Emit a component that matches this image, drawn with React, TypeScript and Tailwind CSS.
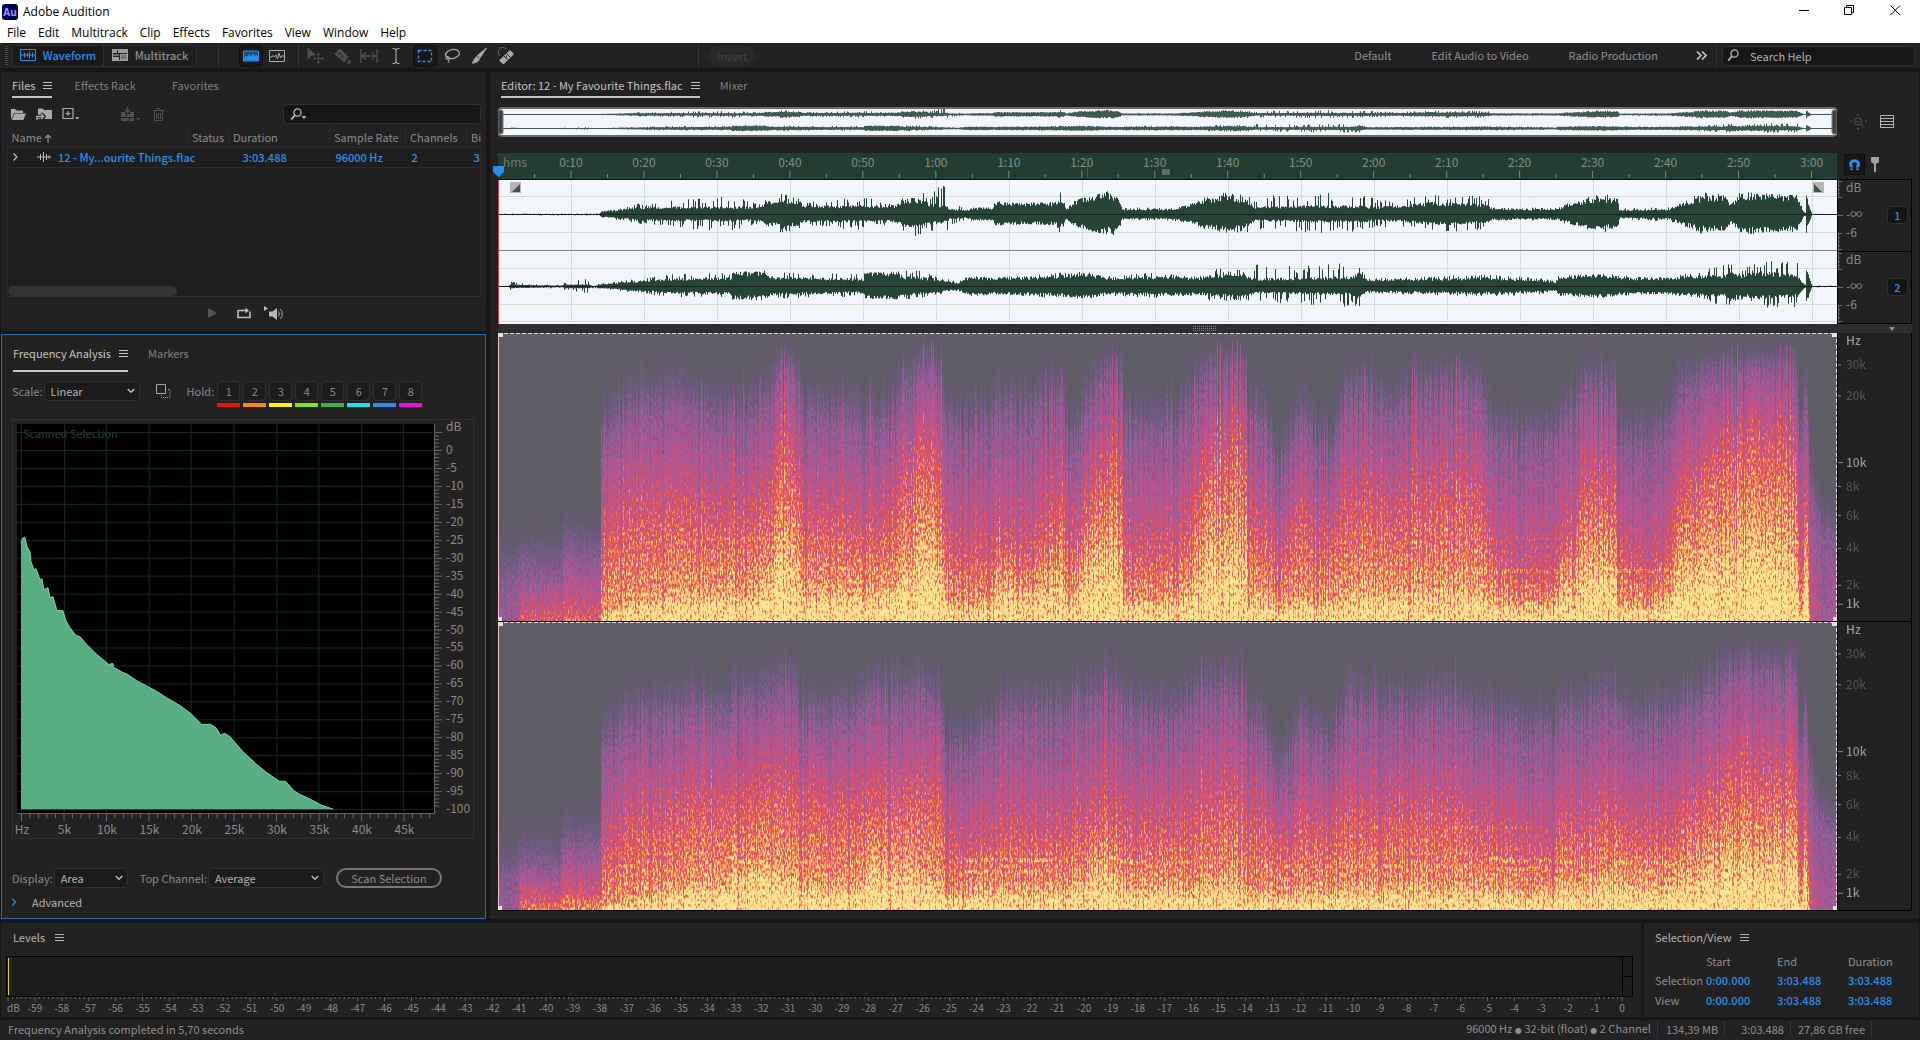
import React from "react";

/* ---------- helpers ---------- */

type Point = number[];

function rng(seed: number) {
  let s = seed;
  return () => {
    s = (s * 1664525 + 1013904223) % 4294967296;
    return s / 4294967296;
  };
}

function sample(points: Point[], t: number, k: number) {
  for (let i = 1; i < points.length; i++) {
    if (t <= points[i][0]) {
      const a = points[i - 1];
      const b = points[i];
      const f = b[0] === a[0] ? 1 : (t - a[0]) / (b[0] - a[0]);
      return a[k] + (b[k] - a[k]) * f;
    }
  }
  return points[points.length - 1][k];
}

const DURATION = 183.488;
const W = 1339;

/* ---------- waveform data: [seconds, body, peak] ---------- */

const WAVE_1: Point[] = [
  [0, 0.5, 1], [13.8, 0.5, 1], [14.2, 3, 4], [16, 4, 6], [19, 7, 11], [25, 7, 16], [32, 7, 20], [36, 7, 11], [36.8, 12, 18], [39, 12, 21],
  [41, 12, 18], [41.8, 8, 12], [50, 8, 19], [54.5, 8, 9], [55.4, 12, 19], [56, 14, 28], [58, 14, 24], [59, 10, 16], [60, 10, 26],
  [61.3, 8, 32], [62, 5, 12], [64, 4, 8], [65, 6, 7], [67.6, 6, 7], [68.2, 12, 13], [72, 10, 11], [76.4, 11, 13], [77, 15, 24], [77.8, 5, 6],
  [79, 12, 14], [82.8, 20, 23], [85.2, 14, 25], [85.4, 5, 7], [92.4, 5, 7], [95, 9, 11], [97, 13, 18], [98.5, 16, 25], [100, 17, 21],
  [102.4, 13, 21], [103.8, 7, 18], [112, 8, 22], [118, 8, 20], [121, 7, 15], [124, 8, 16], [128, 11, 20], [135.7, 9, 19], [135.9, 6, 7],
  [140, 5, 7], [145, 5, 7], [147, 10, 14], [149.6, 14, 19], [153.4, 14, 22], [153.6, 4, 6], [160.5, 5, 8], [162.5, 11, 14], [165, 16, 23],
  [168, 16, 20], [169, 9, 11], [170.2, 18, 24], [174, 18, 21], [178, 16, 20], [178.8, 3, 4], [179.1, 1, 1], [179.2, 19, 20], [179.5, 12, 12],
  [180, 0.5, 0.5], [184, 0.5, 0.5],
];
const WAVE_2: Point[] = [
  [0, 0.5, 0.5], [1.4, 0.5, 0.5], [1.6, 2, 5], [4, 1.5, 3], [8, 1, 2], [8.8, 1, 1], [9, 2, 5], [12.5, 2, 8], [13, 0.5, 2], [14.2, 2, 3], [19, 5, 8],
  [23, 7, 12], [29, 8, 14], [31.9, 8, 13], [32, 13, 15], [36.5, 13, 17], [37.5, 9, 15], [42, 8, 13], [50.1, 7, 13], [50.3, 13, 14],
  [54.6, 13, 15], [55.5, 9, 15], [57, 9, 18], [60, 7, 10], [63, 3, 5], [64, 8, 12], [68, 8, 9], [75, 9, 13], [80, 12, 15], [84, 8, 11], [90, 9, 14],
  [96, 8, 10], [98, 11, 19], [102, 11, 17], [104, 7, 23], [110, 8, 20], [117, 9, 27], [118, 14, 24], [119, 6, 8], [135, 8, 12], [143, 6, 9], [144.9, 4, 5],
  [145.2, 9, 11], [150, 11, 14], [155, 8, 11], [160, 8, 9], [165, 10, 17], [168, 10, 22], [169, 16, 23], [170, 10, 16], [173, 13, 25],
  [178, 11, 26], [178.8, 3, 4], [179.1, 1, 1], [179.2, 16, 18], [179.5, 12, 12], [180, 0.5, 1], [184, 0.5, 1],
];

function wavePath(points: Point[], centre: number, scale: number, seed: number) {
  const r = rng(seed);
  let d = "";
  for (let x = 1; x < W; x++) {
    const t = (x / W) * DURATION;
    const body = sample(points, t, 1);
    const peak = sample(points, t, 2);
    const one = (down: boolean) => {
      let v = body * (0.78 + r() * 0.4);
      if (r() < 0.22) v = body + (peak - body) * (0.4 + r() * 0.6);
      return v * scale * (down ? 0.86 : 1);
    };
    const up = centre - one(false);
    const dn = centre + one(true);
    d += `M${x} ${up.toFixed(1)}V${dn.toFixed(1)}`;
  }
  return d;
}

const wave1 = wavePath(WAVE_1, 35.5, 1, 7);
const wave2 = wavePath(WAVE_2, 107.5, 1, 19);
const mini1 = wavePath(WAVE_1, 6.5, 0.2, 7);
const mini2 = wavePath(WAVE_2, 20.5, 0.2, 19);

/* ---------- spectrogram data: [seconds, violet, red, yellow] as a share of the height ---------- */

const SPEC_1: Point[] = [
  [0, 0.14, -0.5, -0.9], [2.5, 0.14, -0.4, -0.7], [3, 0.18, 0.02, -0.05], [8.5, 0.16, 0.01, -0.05], [9, 0.24, 0.03, -0.02], [14, 0.2, 0.01, -0.03], [14.1, 0.62, 0.26, 0.03], [17, 0.7, 0.34, 0.06],
  [22, 0.74, 0.38, 0.09], [25, 0.74, 0.38, 0.11], [30, 0.7, 0.36, 0.12], [36, 0.7, 0.36, 0.13], [37, 0.76, 0.44, 0.18], [38.5, 0.86, 0.58, 0.3],
  [40, 0.88, 0.6, 0.32], [41, 0.8, 0.5, 0.22], [41.6, 0.7, 0.34, 0.12], [47, 0.7, 0.34, 0.12], [53.6, 0.65, 0.3, 0.12], [55, 0.76, 0.44, 0.18], [57, 0.86, 0.57, 0.3],
  [60.5, 0.86, 0.56, 0.3], [61.3, 0.66, 0.28, 0.08], [66, 0.66, 0.22, 0.07], [68, 0.7, 0.24, 0.1], [68.3, 0.72, 0.3, 0.17], [73, 0.72, 0.26, 0.12],
  [76.5, 0.76, 0.38, 0.18], [77.3, 0.82, 0.44, 0.24], [78, 0.6, 0.25, 0.07], [80.5, 0.72, 0.4, 0.24], [83, 0.86, 0.54, 0.32], [85.4, 0.84, 0.55, 0.3], [85.6, 0.66, 0.25, 0.08],
  [92, 0.66, 0.24, 0.09], [94.5, 0.72, 0.32, 0.14], [96.5, 0.82, 0.52, 0.28], [98, 0.88, 0.62, 0.36], [102.5, 0.88, 0.61, 0.36], [102.8, 0.64, 0.26, 0.07],
  [104, 0.74, 0.36, 0.14], [107, 0.5, 0.23, 0.06], [110, 0.7, 0.36, 0.1], [114, 0.55, 0.28, 0.08], [116, 0.76, 0.4, 0.12], [118.5, 0.78, 0.42, 0.14],
  [122, 0.7, 0.38, 0.12], [126, 0.78, 0.43, 0.14], [130, 0.82, 0.47, 0.16], [134.3, 0.8, 0.45, 0.14], [136, 0.64, 0.26, 0.09], [140, 0.62, 0.16, 0.07],
  [144.5, 0.62, 0.15, 0.07], [146, 0.68, 0.28, 0.16], [149, 0.8, 0.47, 0.25], [153, 0.8, 0.47, 0.25], [153.4, 0.62, 0.25, 0.08], [157, 0.62, 0.17, 0.07], [160.5, 0.66, 0.24, 0.1],
  [162, 0.78, 0.42, 0.22], [166, 0.85, 0.56, 0.3], [170, 0.88, 0.65, 0.36], [177.8, 0.88, 0.62, 0.36], [178.3, 0.55, 0.14, 0.01], [178.8, 0.65, 0.16, 0.05],
  [178.9, 0.76, 0.4, 0.24], [179.4, 0.74, 0.4, 0.22], [179.6, 0.5, 0.08, 0], [181, 0.3, -0.5, -0.9], [184, 0.24, -0.5, -0.9],
];
const SPEC_2: Point[] = [
  [0, 0.1, -0.5, -0.9], [2.5, 0.1, -0.4, -0.7], [3, 0.16, 0.04, -0.03], [8.5, 0.13, 0.03, -0.03], [9, 0.22, 0.07, 0], [14, 0.2, 0.04, 0], [14.1, 0.56, 0.17, 0.02], [18, 0.64, 0.28, 0.04],
  [24, 0.68, 0.36, 0.1], [31.9, 0.65, 0.36, 0.1], [32, 0.72, 0.38, 0.19], [36.5, 0.72, 0.41, 0.18], [40, 0.76, 0.43, 0.15], [42, 0.64, 0.37, 0.1], [50, 0.68, 0.36, 0.1], [50.2, 0.72, 0.36, 0.18],
  [55, 0.72, 0.4, 0.17], [58, 0.75, 0.43, 0.15], [60.5, 0.68, 0.38, 0.11], [61.5, 0.52, 0.22, 0.06], [66, 0.58, 0.21, 0.08], [70, 0.68, 0.26, 0.09], [78, 0.68, 0.28, 0.1], [83, 0.74, 0.36, 0.18],
  [86, 0.7, 0.3, 0.11], [92, 0.64, 0.28, 0.09], [96, 0.74, 0.36, 0.11], [102.4, 0.77, 0.43, 0.14], [102.8, 0.58, 0.27, 0.07], [104, 0.68, 0.36, 0.1], [107, 0.45, 0.23, 0.06],
  [110, 0.64, 0.32, 0.09], [114, 0.55, 0.27, 0.08], [117, 0.72, 0.36, 0.1], [122, 0.66, 0.32, 0.1], [130, 0.7, 0.36, 0.1], [136, 0.64, 0.26, 0.09], [144, 0.6, 0.2, 0.08], [144.6, 0.56, 0.12, 0.05],
  [145, 0.65, 0.29, 0.11], [152, 0.72, 0.36, 0.15], [155, 0.62, 0.26, 0.11], [161, 0.64, 0.26, 0.11], [165, 0.72, 0.39, 0.18], [170, 0.82, 0.48, 0.24], [177.8, 0.81, 0.46, 0.24], [178.3, 0.5, 0.14, 0.01],
  [178.8, 0.55, 0.16, 0.05], [178.9, 0.68, 0.34, 0.2], [179.4, 0.66, 0.34, 0.18], [179.6, 0.45, 0.08, 0], [181, 0.3, -0.5, -0.9], [184, 0.24, -0.5, -0.9],
];

const H = 289;

function Spectrum({ id, points, seed, harmonics }: { id: string; points: Point[]; seed: number; harmonics: number[][] }) {
  const r = rng(seed);
  const columns: React.ReactNode[] = [];
  for (let x = 0; x < W; x++) {
    const t = (x / W) * DURATION;
    let k = 0.97 + r() * 0.06;
    const dice = r();
    let shade = "";
    if (dice < 0.14) {
      k *= 0.88;
      shade = "#000";
    } else if (dice > 0.94 && t > 14) {
      k *= 1.1;
      shade = "#fff";
    }
    if (t > 61.5 && t < 160 && x % 5 === 0) {
      k *= 0.86;
      shade = "#000";
    }
    const hv = sample(points, t, 1) * k;
    const hr = sample(points, t, 2) * k * (0.9 + r() * 0.2);
    const hy = sample(points, t, 3) * k * (0.8 + r() * 0.4);
    const y = [1 - Math.min(1, hv + 0.22), 1 - Math.min(0.96, hv), 1 - hr, 1 - hy, 1 - hy * 0.4, 1.02].map((v) => v * H);
    for (let i = 0; i < 5; i++) {
      columns.push(
        <rect key={`${x}-${i}`} x={x} width="1" y={y[i].toFixed(1)} height={Math.max(0, y[i + 1] - y[i] + 0.4).toFixed(1)} fill={`url(#${id}-g${i})`} />
      );
    }
    if (shade) {
      columns.push(<rect key={`${x}-s`} x={x} width="1" y={y[1].toFixed(1)} height={H} fill={shade} opacity={shade === "#000" ? 0.14 : 0.1} />);
    }
  }
  const dashes: React.ReactNode[] = [];
  harmonics.forEach(([from, to, level, alpha], n) => {
    let x = (from / DURATION) * W;
    const end = (to / DURATION) * W;
    while (x < end) {
      const w = 3 + r() * 12;
      dashes.push(<rect key={`${n}-${x}`} x={x} width={w} y={(1 - level) * H} height="4" fill="#fff" opacity={alpha * (0.5 + r() * 0.7)} />);
      x += w + r() * 6;
    }
  });
  const levels = [0, 0.28, 0.57, 0.75, 0.94, 1].map((v) => Math.round(v * 255));
  return (
    <svg className="block h-full w-full" viewBox={`0 0 ${W} ${H}`} preserveAspectRatio="none" role="img" aria-label="Spectral frequency display">
      <defs>
        {[0, 1, 2, 3, 4].map((i) => (
          <linearGradient key={i} id={`${id}-g${i}`} x1="0" y1="0" x2="0" y2="1">
            <stop offset="0" stopColor={`rgb(${levels[i]},${levels[i]},${levels[i]})`} />
            <stop offset="1" stopColor={`rgb(${levels[i + 1]},${levels[i + 1]},${levels[i + 1]})`} />
          </linearGradient>
        ))}
        <filter id={`${id}-heat`} x="0" y="0" width="100%" height="100%" colorInterpolationFilters="sRGB">
          <feTurbulence type="fractalNoise" baseFrequency="0.67 0.23" numOctaves="3" seed={seed} result="t" />
          <feColorMatrix in="t" type="matrix" values="0 0 0 2.2 -0.6  0 0 0 2.2 -0.6  0 0 0 2.2 -0.6  0 0 0 0 1" result="n" />
          <feComposite in="SourceGraphic" in2="n" operator="arithmetic" k1="0.6" k2="0.7" k3="0" k4="0" />
          <feComponentTransfer>
            <feFuncR type="table" tableValues="0.373 0.39 0.45 0.58 0.69 0.79 0.87 0.97 0.99 0.99 0.99" />
            <feFuncG type="table" tableValues="0.365 0.36 0.36 0.36 0.34 0.32 0.33 0.5 0.73 0.89 0.9" />
            <feFuncB type="table" tableValues="0.4 0.43 0.52 0.59 0.58 0.5 0.37 0.31 0.44 0.57 0.58" />
          </feComponentTransfer>
        </filter>
      </defs>
      <g filter={`url(#${id}-heat)`} shapeRendering="crispEdges">
        <rect width={W} height={H} fill="#000" />
        {columns}
        {dashes}
      </g>
      <path d={`M0 .5H${W}M${W - 0.5} 0V${H}`} fill="none" stroke="#e4e4e4" strokeDasharray="4 2" />
      <path d={`M.5 0V${H}`} stroke="#f3c5c8" />
      <path d={`M0 0h5v4H0zM${W - 5} 0h5v4h-5zM0 ${H - 4}h4v4H0zM${W - 4} ${H - 4}h4v4h-4z`} fill="#e6dfe4" />
    </svg>
  );
}

const HARMONICS_1 = [
  [28, 60, 0.18, 0.16], [22, 60, 0.29, 0.12], [62, 78, 0.18, 0.16], [104, 135, 0.18, 0.16], [136, 145, 0.18, 0.28], [136, 145, 0.29, 0.14], [153, 161, 0.18, 0.24], [140, 145, 0.13, 0.14], [155, 159, 0.13, 0.16],
];
const HARMONICS_2 = [
  [64, 74, 0.18, 0.4], [64, 74, 0.14, 0.34], [75, 78, 0.18, 0.3], [80, 86, 0.18, 0.2], [86, 92, 0.17, 0.2], [104, 134, 0.16, 0.14], [122, 145, 0.29, 0.14], [136, 144, 0.18, 0.4], [136, 144, 0.15, 0.34], [153, 161, 0.17, 0.32], [155, 158, 0.14, 0.3],
];

/* ---------- icons ---------- */

function Menu() {
  return (
    <svg width="9" height="9" viewBox="0 0 9 9" stroke="currentColor" aria-hidden="true">
      <path d="M0 1.5h9M0 4.5h9M0 7.5h9" />
    </svg>
  );
}

function Magnifier({ caret = false }: { caret?: boolean }) {
  return (
    <svg width="18" height="13" viewBox="0 0 18 13" fill="none" stroke="#b4b4b4" strokeWidth="1.3" aria-hidden="true">
      <circle cx="7.5" cy="4.5" r="3.6" />
      <path d="M5 7.2 1.2 11.6" strokeWidth="1.8" />
      {caret && <path d="M11.5 8h5l-2.5 3z" fill="#b4b4b4" stroke="none" />}
    </svg>
  );
}

function Tool({ label, active, dim, children }: { label: string; active?: boolean; dim?: boolean; children: React.ReactNode }) {
  return (
    <button
      aria-label={label}
      className={`flex h-[22px] w-6 items-center justify-center rounded-sm border ${active ? "border-[#101010] bg-[#181818] text-[#2f8ee8]" : dim ? "border-transparent text-[#4e4e4e]" : "border-transparent text-[#a9a9a9]"}`}
    >
      <svg width="18" height="18" viewBox="0 0 18 18" fill="none" stroke="currentColor" aria-hidden="true">
        {children}
      </svg>
    </button>
  );
}

function Tab({ label, active, wide }: { label: string; active?: boolean; wide?: boolean }) {
  if (!active) return <button className="pb-[5px] text-[#808080]">{label}</button>;
  return (
    <button className={`flex items-center gap-2 border-b-2 border-[#c4c4c4] ${wide ? "pb-[9px]" : "pb-[3px]"} text-[#c4c4c4]`}>
      {label}
      <Menu />
    </button>
  );
}

function Choice({ id, value, className }: { id: string; value: string; className: string }) {
  return (
    <span className={`relative h-5 ${className}`}>
      <select id={id} className="h-5 w-full appearance-none rounded-sm border border-[#303030] bg-[#1b1b1b] pl-[6px] leading-[18px] text-[#b4b4b4]">
        <option>{value}</option>
      </select>
      <svg className="pointer-events-none absolute top-[7px] right-[5px]" width="8" height="6" viewBox="0 0 8 6" fill="none" stroke="#c0c0c0" strokeWidth="1.4" aria-hidden="true">
        <path d="M.7 1 4 4.3 7.3 1" />
      </svg>
    </span>
  );
}

/* ---------- title and tool bars ---------- */

function TitleBar() {
  return (
    <header className="bg-white font-['Open_Sans',sans-serif] text-xs text-black">
      <div className="flex h-[23px] items-center pl-[2px]">
        <svg width="16" height="16" viewBox="0 0 16 16" aria-hidden="true">
          <rect width="16" height="16" rx="3" fill="#00005b" />
          <text x="8" y="11.5" textAnchor="middle" fontSize="10" fontWeight="700" fill="#9999ff" fontFamily="Open Sans">Au</text>
        </svg>
        <span className="ml-[5px]">Adobe Audition</span>
        <div className="ml-auto flex self-start pr-[2px]">
          <button aria-label="Minimize" className="flex h-5 w-11 items-center justify-center">
            <svg width="11" height="11" stroke="#000"><path d="M0 5.5h10" /></svg>
          </button>
          <button aria-label="Restore" className="flex h-5 w-[46px] items-center justify-center">
            <svg width="11" height="11" fill="none" stroke="#000"><path d="M.5 2.5h7v7h-7zM2.5 2.5V.5h7v7h-2" /></svg>
          </button>
          <button aria-label="Close" className="flex h-5 w-[46px] items-center justify-center">
            <svg width="11" height="11" stroke="#000"><path d="m.5.5 9.5 9.5M10 .5.5 10" /></svg>
          </button>
        </div>
      </div>
      <nav className="flex h-5 items-center gap-3 pl-[7px] leading-5">
        {["File", "Edit", "Multitrack", "Clip", "Effects", "Favorites", "View", "Window", "Help"].map((m) => (
          <button key={m}>{m}</button>
        ))}
      </nav>
    </header>
  );
}

function ToolBar() {
  return (
    <div className="flex h-[25px] items-center bg-[#222222]">
      <svg width="3" height="19" className="ml-[5px]" aria-hidden="true"><path d="M1.5 0v19" stroke="#4a4a4a" strokeWidth="3" strokeDasharray="1 1" /></svg>
      <div className="ml-1 flex h-[22px] rounded-sm border border-[#303030] bg-[#1e1e1e]">
        <button className="flex w-[90px] items-center justify-center gap-[7px] bg-[#191919] pb-px font-medium text-[#2f8ee8]">
          <svg width="16" height="12" fill="none" stroke="#2f8ee8" aria-hidden="true">
            <path d="M.5 .5h15v11H.5zM1 6h14M4.5 3.5v5M7.5 4v4M9.5 2.5v7M12.5 3.5v5" />
          </svg>
          Waveform
        </button>
        <button className="flex w-[93px] items-center justify-center gap-[7px] border-l border-[#303030] pb-px font-medium text-[#8f8f8f]">
          <svg width="16" height="12" aria-hidden="true">
            <path d="M0 0h16v12H0z" fill="#9c9c9c" />
            <path d="M1 4.5h14M1 7.5h7M7.5 5v6M5.5 1v3" stroke="#222" />
            <path d="M1 5h6v2H1zM9 6h5v4H9z" fill="#6e6e6e" />
          </svg>
          Multitrack
        </button>
      </div>
      <span className="ml-[21px] h-[22px] w-px bg-[#353535]" />
      <div className="ml-5 flex gap-[2px]">
        <Tool label="Spectral frequency display" active>
          <path d="M1.5 4h15v10h-15z" fill="#174e86" />
          <path d="M2 12.5 4 9l1 2 2-3 2 2 2-3 1 3 2-2 2 3v2H2z" fill="#2f8ee8" />
        </Tool>
        <Tool label="Spectral pitch display">
          <path d="M1.5 3.5h15v11h-15z" />
          <path d="M2 10h2l1-1.5L6.5 10 8 8l1.5 4L11 6l1.5 5 1-2H16" />
        </Tool>
      </div>
      <span className="ml-[9px] h-[22px] w-px bg-[#353535]" />
      <div className="ml-1 flex gap-[3px]">
        <Tool label="Move" dim>
          <path d="m2 1 7 7-4 .3L2 12z" fill="currentColor" />
          <path d="M12.5 7v9M8 11.5h9M11 8l1.5-1.5L14 8M11 15l1.5 1.5L14 15M9 10l-1.5 1.5L9 13M16 10l1.5 1.5L16 13" />
        </Tool>
        <Tool label="Razor" dim>
          <path d="m2 7 5-5 8 8-4 5z" fill="currentColor" />
          <path d="m6 6 5 5" stroke="#222" strokeWidth="2" strokeDasharray="2 1.5" />
          <path d="m16 13 1.5 3-3 .5z" fill="currentColor" />
        </Tool>
        <Tool label="Slip" dim>
          <path d="M1 2v14M17 2v14M3 9h12M6 5.5 2.5 9 6 12.5M12 5.5 15.5 9 12 12.5" strokeWidth="1.4" />
        </Tool>
        <Tool label="Time selection">
          <path d="M5.5 1.5h2L9 3l1.5-1.5h2M9 3v12M5.5 16.5h2L9 15l1.5 1.5h2" strokeWidth="1.2" />
        </Tool>
        <span className="ml-[2px]">
          <Tool label="Marquee selection" active>
            <path d="M2.5 3.5h13v11h-13z" strokeDasharray="3 2" strokeWidth="1.4" />
          </Tool>
        </span>
        <Tool label="Lasso selection">
          <ellipse cx="9.5" cy="7" rx="7" ry="4.5" transform="rotate(-12 9.5 7)" strokeWidth="1.3" />
          <path d="M4 9.5c-3 2 0 4 2 2.5s-1-3-2-2.5c1 3 3 3 1 6.5" />
        </Tool>
        <Tool label="Paintbrush selection">
          <path d="M16.5 1 10 11 7.5 8.5z" fill="currentColor" />
          <path d="M7 9.5 9.5 12c-1 3-4 4-7.5 4 2-1.5 2-5 5-6.5z" fill="currentColor" />
        </Tool>
        <Tool label="Spot healing brush">
          <path d="m3 13.5 10-9.5 3 3-9.5 9.5z" fill="currentColor" strokeWidth="1.5" strokeLinejoin="round" />
          <path d="m7 9 3.5 3.5M9.5 6.5 13 10M9.5 8.5v2" stroke="#222" />
          <path d="M9 2a4 4 0 0 0-7 1c-1 2-.5 4 .5 6" strokeDasharray="1 1" />
        </Tool>
      </div>
      <span className="ml-[180px] h-[22px] w-px bg-[#353535]" />
      <button disabled className="ml-[9px] h-5 w-12 rounded-full bg-[#292929] text-[#454545]">Invert</button>
      <div className="ml-auto flex h-full items-center text-[#909090]">
        <button className="mr-10 pb-px">Default</button>
        <button className="mr-10 pb-px">Edit Audio to Video</button>
        <button className="mr-[38px] pb-px">Radio Production</button>
        <button aria-label="More workspaces" className="mr-[9px]">
          <svg width="11" height="9" fill="none" stroke="#c8c8c8" strokeWidth="1.6"><path d="m1 .5 4 4-4 4M6 .5l4 4-4 4" /></svg>
        </button>
        <span className="h-full w-px bg-[#303030]" />
        <label className="mx-[5px] flex h-5 w-[193px] items-center rounded-sm border border-[#303030] bg-[#161616] pl-1">
          <Magnifier />
          <input aria-label="Search Help" placeholder="Search Help" className="ml-[5px] w-36 bg-transparent placeholder:text-[#b0b0b0]" />
        </label>
      </div>
    </div>
  );
}

/* ---------- files panel ---------- */

function FilesPanel() {
  const th = "border-l border-[#2c2c2c] pl-1 text-left font-normal whitespace-nowrap";
  return (
    <section className="flex h-[259px] flex-col bg-[#222222]">
      <div className="flex h-[26px] items-end gap-[22px] pl-[11px]">
        <Tab label="Files" active />
        <div className="flex gap-9">
          <Tab label="Effects Rack" />
          <Tab label="Favorites" />
        </div>
      </div>
      <div className="mt-[6px] flex h-5 items-center pr-[5px] pl-[9px]">
        <button aria-label="Open file">
          <svg width="17" height="13" fill="#aaa"><path d="M1 1h4l1.5 1.5H13V5H4l-2.5 6H1z" /><path d="M4.5 5.5H16L13.500 12H2z" /></svg>
        </button>
        <button aria-label="Import file" className="ml-[9px]">
          <svg width="17" height="14" fill="#aaa"><path d="M2 6V1.5h4.5L8 3h8v9H2z" /><path d="M0 13V9.500h7M5 6.500l3 3-3 3" fill="none" stroke="#222" strokeWidth="3.5" /><path d="M1 13V9.500h6M5 7l2.500 2.500L5 12" fill="none" stroke="#aaa" strokeWidth="1.5" /></svg>
        </button>
        <button aria-label="New file" className="ml-[9px]">
          <svg width="18" height="14" fill="none" stroke="#aaa" strokeWidth="1.2"><path d="M1 1.5h10v10H1zM3.500 6.500h5M6 4v5" /><path d="M13 10h4.500L15.200 12.500z" fill="#aaa" stroke="none" /></svg>
        </button>
        <button aria-label="Insert into multitrack" className="ml-10">
          <svg width="21" height="16" fill="#505050"><path d="M1 6h4v2h5V6h4v9H1z" /><path d="M7.5 0v6M5 3.500l2.500 3 2.500-3" fill="none" stroke="#505050" strokeWidth="1.3" /><path d="M1 11.500h13M6.500 8v3M9.500 12v3" stroke="#222" /><path d="M16 12h4.500l-2.300 2.500z" /></svg>
        </button>
        <button aria-label="Delete" className="ml-3">
          <svg width="11" height="13" fill="none" stroke="#505050"><path d="M0 2.500h11M4 2V.5h3V2M1.500 3v9.500h8V3M3.500 5v6M5.500 5v6M7.500 5v6" /></svg>
        </button>
        <label className="ml-auto flex h-5 w-[198px] items-center rounded-sm border border-[#303030] bg-[#161616] pl-[6px]">
          <Magnifier caret />
          <input aria-label="Search files" className="w-40 bg-transparent" />
        </label>
      </div>
      <div className="mt-[3px] ml-[6px] mr-[5px] overflow-hidden">
        <table className="w-full table-fixed border-collapse">
          <colgroup>
            <col className="w-[180px]" /><col className="w-[41px]" /><col className="w-[101px]" /><col className="w-[76px]" /><col className="w-[61px]" /><col />
          </colgroup>
          <thead className="text-[#8a8a8a]">
            <tr className="h-5">
              <th className="pl-1 text-left font-normal">
                Name <svg className="inline" width="8" height="9" fill="none" stroke="#8a8a8a" strokeWidth="1.3"><path d="M4 9V1M1 4l3-3 3 3" /></svg>
              </th>
              <th className={th}>Status</th>
              <th className={th}>Duration</th>
              <th className={th}>Sample Rate</th>
              <th className={th}>Channels</th>
              <th className={th}>Bi</th>
            </tr>
          </thead>
          <tbody className="bg-[#1e1e1e] font-medium text-[#2f8ee8]">
            <tr className="h-5 border border-[#2a2a2a]">
              <td colSpan={2} className="pl-[5px]">
                <span className="flex items-center">
                  <svg width="5" height="8" fill="none" stroke="#bbb" strokeWidth="1.2"><path d="m.5.5 3.500 3.500-3.500 3.500" /></svg>
                  <svg className="ml-[19px]" width="14" height="10" stroke="#bbb"><path d="M0 5h14M3.500 2v6M6.500 0v10M9.500 2v6M12 3.500v3" /></svg>
                  <span className="ml-[7px] whitespace-nowrap">12 - My...ourite Things.flac</span>
                </span>
              </td>
              <td className="pl-[14px]">3:03.488</td>
              <td className="pl-[6px]">96000 Hz</td>
              <td className="pl-[6px]">2</td>
              <td className="pl-[7px]">3</td>
            </tr>
          </tbody>
        </table>
      </div>
      <div className="mr-[5px] ml-[6px] flex flex-1 items-end border border-t-0 border-[#2e2e2e] bg-[#1e1e1e]">
        <span className="h-[10px] w-[169px] rounded-full bg-[#333333]" />
      </div>
      <div className="flex h-[34px] items-center gap-[18px] pb-[2px] pl-[206px]">
        <button aria-label="Play"><svg width="11" height="10"><path d="m1 0 9 5-9 5z" fill="#555" /></svg></button>
        <button aria-label="Loop playback">
          <svg width="16" height="12" fill="none" stroke="#bcbcbc" strokeWidth="1.6"><path d="M5 3.500H2v7h12V4.500" /><path d="M5 3.500h5" /><path d="M9.500.5 13 3.500l-3.500 3z" fill="#bcbcbc" stroke="none" /></svg>
        </button>
        <button aria-label="Auto-play" className="-ml-[6px]">
          <svg width="21" height="15" fill="none" stroke="#aaa"><path d="m0 0 4 2.500L0 5z" fill="#bbb" stroke="none" /><path d="M5 5.500h3.500L13 2v12L8.500 10.500H5z" fill="#bbb" stroke="none" /><path d="M14.500 5.500a4 4 0 0 1 0 5M16 3a6.500 6.500 0 0 1 0 10" /></svg>
        </button>
      </div>
    </section>
  );
}

/* ---------- frequency analysis panel ---------- */

const SPECTRUM: Point[] = [
  [21, 543], [23, 538], [25, 538], [27, 547], [30, 552], [31, 562], [34, 570], [36, 569], [40, 580], [42, 579], [44, 590], [48, 588], [50, 598], [53, 597], [57, 611], [63, 611],
  [66, 621], [70, 628], [76, 636], [80, 637], [86, 644], [97, 655], [109, 665], [113, 664], [114, 668], [123, 673], [128, 675], [138, 682], [148, 687], [157, 692], [168, 699],
  [180, 706], [191, 714], [202, 725], [211, 725], [217, 729], [221, 736], [225, 734], [230, 737], [243, 752], [257, 765], [268, 774], [280, 782], [286, 782], [295, 792],
  [300, 795], [311, 800], [322, 806], [334, 810],
];
const HOLDS = ["bg-[#e41408]", "bg-[#f58a18]", "bg-[#fbf31e]", "bg-[#7ee81c]", "bg-[#43b043]", "bg-[#1de4ee]", "bg-[#2f8fe8]", "bg-[#e413dd]"];

function SpectrumChart() {
  const minorY = Array.from({ length: 105 }, (_, i) => 432.5 + i * 3.6);
  const minorX = Array.from({ length: 49 }, (_, i) => 21.5 + i * 8.52);
  const line = "M" + SPECTRUM.map((p) => p.join(" ")).join("L");
  return (
    <svg className="block w-full overflow-visible" viewBox="12 419 463 421" fontSize="12" fill="#8a8a8a" role="img" aria-label="Frequency analysis graph">
      <rect x="12.5" y="419.5" width="462" height="420" fill="none" stroke="#303030" />
      <rect x="17" y="424" width="418" height="390" fill="#000" />
      <text x="23" y="438" fontSize="11" fill="#3c3c3c">Scanned Selection</text>
      <path
        d={Array.from({ length: 22 }, (_, i) => `M17 ${432.5 + i * 18}H434`).join("") + Array.from({ length: 10 }, (_, i) => `M${Math.round(21 + i * 42.6) + 0.5} 424V813`).join("")}
        stroke="#11301a"
      />
      <path d={`${line}V810H21Z`} fill="#62c090" fillOpacity="0.9" />
      <path d={line} fill="none" stroke="#74dcaa" />
      <path d={`M435.5 424V814.5H17${minorY.map((y, i) => `M436 ${y.toFixed(1)}h${i % 5 === 0 ? 7 : 4}`).join("")}${minorX.map((x, i) => `M${x.toFixed(1)} 815v${i % 5 === 0 ? 7 : 4}`).join("")}`} fill="none" stroke="#6a6a6a" />
      <text x="447" y="431">dB</text>
      {Array.from({ length: 21 }, (_, i) => (
        <text key={i} x="447" y={454 + i * 18}>{i === 0 ? "0" : `-${i * 5}`}</text>
      ))}
      {["Hz", "5k", "10k", "15k", "20k", "25k", "30k", "35k", "40k", "45k"].map((s, i) => (
        <text key={s} x={22 + i * 42.6} y="835" textAnchor="middle">{s}</text>
      ))}
    </svg>
  );
}

function FrequencyPanel() {
  return (
    <section className="flex flex-1 flex-col border border-[#2c6fb0] bg-[#222222] text-[#8a8a8a]">
      <div className="flex h-[37px] items-end gap-5 pl-[11px]">
        <Tab label="Frequency Analysis" active wide />
        <span className="pb-[6px]"><Tab label="Markers" /></span>
      </div>
      <div className="mt-[9px] flex items-start pl-[10px]">
        <label htmlFor="scale" className="leading-[21px]">Scale:</label>
        <Choice id="scale" value="Linear" className="ml-px w-24" />
        <button aria-label="Copy graph" className="mt-[3px] ml-4">
          <svg width="15" height="14" fill="none" stroke="#aaa"><path d="M.5.5h9v9h-9z" /><path d="M12 5.5h2v8H5.5v-2" strokeDasharray="1 1" /></svg>
        </button>
        <span className="ml-4 leading-[21px]">Hold:</span>
        <div className="ml-[3px] flex gap-[3px]">
          {HOLDS.map((c, i) => (
            <span key={c} className="flex flex-col gap-[2px]">
              <button className="h-5 w-[23px] rounded-sm border border-[#303030] bg-[#1c1c1c] leading-[18px]">{i + 1}</button>
              <span className={`h-1 ${c}`} />
            </span>
          ))}
        </div>
      </div>
      <div className="mt-3 mr-[11px] ml-[10px]">
        <SpectrumChart />
      </div>
      <div className="mt-auto flex items-center pl-[10px]">
        <label htmlFor="display">Display:</label>
        <Choice id="display" value="Area" className="ml-px w-[74px]" />
        <label htmlFor="channel" className="ml-3">Top Channel:</label>
        <Choice id="channel" value="Average" className="ml-px w-[116px]" />
        <button className="ml-3 h-5 w-[106px] rounded-full border-2 border-[#787878] leading-4">Scan Selection</button>
      </div>
      <button className="mt-[6px] mb-2 flex items-center gap-4 pl-[10px] text-[#b4b4b4]">
        <svg width="4" height="8" fill="none" stroke="#2f8ee8" strokeWidth="1.2"><path d="m.5.5 3 3.500-3 3.500" /></svg>
        Advanced
      </button>
    </section>
  );
}

/* ---------- editor ---------- */

const pct = (seconds: number) => `${(seconds / DURATION) * 100}%`;

function Ruler() {
  return (
    <svg className="block h-[26px] w-full overflow-visible bg-[#243d33]" fontSize="12" fill="#7d9186" aria-hidden="true">
      <text x="5" y="14" opacity="0.8">hms</text>
      {Array.from({ length: 18 }, (_, i) => {
        const s = (i + 1) * 10;
        return (
          <text key={s} x={pct(s)} y="14" textAnchor="middle">{`${Math.floor(s / 60)}:${String(s % 60).padStart(2, "0")}`}</text>
        );
      })}
      {Array.from({ length: 36 }, (_, i) => (
        <line key={i} x1={pct((i + 1) * 5)} x2={pct((i + 1) * 5)} y1={i % 2 ? 18 : 21} y2="25" stroke="#7d9186" />
      ))}
      <line x1={pct(80.8)} x2={pct(80.8)} y1="6" y2="25" stroke="#2b6a8a" />
      <svg x="49.7%" y="16" overflow="visible"><path d="M-.5 0v6M1.5 0v6M3.5 0v6M5.5 0v6" stroke="#8fa396" /></svg>
      <path d="M-5 13h11v6L.5 24-5 19z" fill="#2a8cec" />
    </svg>
  );
}

function Waveforms() {
  const grid = [17.5, 53.5, 89.5, 125.5, 142.5].map((y) => `M0 ${y}H${W}`).join("") + Array.from({ length: 18 }, (_, i) => `M${Math.round(((i + 1) * 10 / DURATION) * W) + 0.5} 0V142`).join("");
  return (
    <svg className="block h-[145px] w-full bg-[#f3f5fc]" viewBox={`0 0 ${W} 145`} preserveAspectRatio="none" role="img" aria-label="Stereo waveform">
      <path d={grid} stroke="#cfe0d3" />
      <path d={`M0 71.5H${W}`} stroke="#7f8a76" />
      <path d={wave1} stroke="#264536" strokeWidth="1" transform="translate(.5 0)" />
      <path d={wave2} stroke="#264536" strokeWidth="1" transform="translate(.5 0)" />
      <path d={`M0 35.5H${W}M0 107.5H${W}`} stroke="#14231c" />
      <path d="M.5 0V145" stroke="#d0434f" />
      <path d={`M0 .5H${W}`} stroke="#111" />
      <path d="M12 3h11v11H12zM1315 3h11v11h-11z" fill="#b5b5b5" />
      <path d="M22 5v8h-8zM1316 5v8h8z" fill="#4c4c4c" />
    </svg>
  );
}

function ChannelScale({ channel }: { channel: number }) {
  return (
    <div className="flex h-[72px] items-center border-b border-black">
      <svg className="h-full w-0 min-w-0 flex-1 overflow-visible" fontSize="12" fill="#8a8a8a" aria-hidden="true">
        <path d="M0 1.5h4M0 5.5h2M0 9.5h2M0 13.5h2M0 17.5h4M0 35.5h5M0 53.5h4M0 57.5h2M0 61.5h2M0 65.5h2M0 69.5h4M.5 0v18M.5 53v18" stroke="#6a6a6a" />
        <text x="8" y="12">dB</text>
        <text x="8" y="39">-∞</text>
        <text x="8" y="57">-6</text>
      </svg>
      <button className="mr-[3px] mb-[2px] h-[18px] w-[21px] shrink-0 rounded-sm border border-[#303030] bg-[#151515] leading-4 font-medium text-[#2f8ee8]">{channel}</button>
    </div>
  );
}

const HZ: [string, string, boolean][] = [
  ["Hz", "2.9%", true], ["30k", "11.1%", false], ["20k", "21.8%", false], ["10k", "45%", true], ["8k", "53.3%", false],
  ["6k", "63.4%", false], ["4k", "74.8%", false], ["2k", "87.6%", false], ["1k", "94.2%", true],
];

function HzScale() {
  return (
    <svg className="block h-full w-full overflow-visible" fontSize="12" aria-hidden="true">
      {HZ.map(([label, y, bright]) => (
        <React.Fragment key={label}>
          {label !== "Hz" && <line x1="0" x2={bright ? 5 : 3} y1={y} y2={y} stroke="#8a8a8a" />}
          <text x="8" y={y} dy="4" fill={bright ? "#949494" : "#555"} fontWeight={bright ? 500 : 400}>{label}</text>
        </React.Fragment>
      ))}
    </svg>
  );
}

function Editor() {
  return (
    <section className="flex min-w-0 flex-1 flex-col bg-[#222222] pr-[7px] pb-2 pl-2">
      <div className="flex h-[26px] items-end gap-5 pl-[3px]">
        <Tab label="Editor: 12 - My Favourite Things.flac" active />
        <Tab label="Mixer" />
      </div>
      <div className="mt-[9px] flex h-[30px] items-center">
        <svg className="block h-[30px] min-w-0 flex-1" viewBox={`0 0 ${W} 30`} preserveAspectRatio="none" role="img" aria-label="Overview">
          <rect y="1" width={W} height="28" rx="4" fill="#f3f5fc" stroke="#6a6a6a" strokeWidth="2" />
          <g transform="translate(.5 1)" stroke="#3e5b4e">
            <path d={mini1} /><path d={mini2} />
            <path d={`M0 6.5H${W}M0 20.5H${W}`} />
          </g>
          <rect x="0" y="3" width="5" height="24" rx="2" fill="#444" stroke="#777" />
          <rect x={W - 5} y="3" width="5" height="24" rx="2" fill="#444" stroke="#777" />
        </svg>
        <div className="flex w-[75px] items-center gap-[13px] pb-px pl-[13px]">
          <button aria-label="Zoom out full">
            <svg width="17" height="16" fill="none" stroke="#555"><circle cx="8" cy="7.5" r="3.5" /><path d="M6.5 7.5h3M10.500 10l3.500 3.500M7 1.500 8 0l1 1.500M7 14l1 1.500L9 14M1.500 6.500 0 7.500l1.500 1M15 6.500l1.500 1-1.500 1" /></svg>
          </button>
          <button aria-label="Channel list">
            <svg width="14" height="13" fill="none" stroke="#b4b4b4"><path d="M.5.5h13v12H.5zM0 3.5h14M0 6.5h14M0 9.5h14" /></svg>
          </button>
        </div>
      </div>
      <div className="mt-[16px] flex">
        <div className="min-w-0 flex-1"><Ruler /></div>
        <div className="flex w-[75px] items-center pb-[3px] pl-[7px]">
          <button aria-label="Toggle snapping" className="flex h-[21px] w-[21px] items-center justify-center border border-[#101010] bg-[#171717]">
            <svg width="13" height="13" fill="none" stroke="#2f8ee8" strokeWidth="3"><path d="M3.5 12V9C-1 .5 14 .5 9.5 9v3" /><path d="M1 10h4.5M7.5 10H12" stroke="#171717" strokeWidth="1" /></svg>
          </button>
          <button aria-label="Add marker" className="ml-1">
            <svg width="12" height="15" fill="#a0a0a0"><path d="M2 0h8v5L6 8 2 5z" /><path d="M5 5h2v10H5z" /></svg>
          </button>
        </div>
      </div>
      <div className="flex">
        <div className="min-w-0 flex-1"><Waveforms /></div>
        <div className="w-[75px] border-x border-t border-black"><ChannelScale channel={1} /><ChannelScale channel={2} /></div>
      </div>
      <div className="flex h-[9px] items-center justify-between bg-[#2e2e2e] pl-[695px] pr-4">
        <svg width="24" height="5"><path d="M0 .5h24M0 2.5h24M0 4.5h24" stroke="#8a8a8a" strokeDasharray="1 1" /></svg>
        <svg width="7" height="4"><path d="M0 0h6L3 4z" fill="#909090" /></svg>
      </div>
      <div className="flex min-h-80 flex-1 flex-col">
        <div className="flex min-h-0 flex-1 border-b border-black">
          <div className="min-w-0 flex-1 [contain:size]"><Spectrum id="left" points={SPEC_1} seed={11} harmonics={HARMONICS_1} /></div>
          <div className="w-[75px] border-x border-black [contain:size]"><HzScale /></div>
        </div>
        <div className="flex min-h-0 flex-1 border-b border-black">
          <div className="min-w-0 flex-1 [contain:size]"><Spectrum id="right" points={SPEC_2} seed={29} harmonics={HARMONICS_2} /></div>
          <div className="w-[75px] border-x border-black [contain:size]"><HzScale /></div>
        </div>
      </div>
    </section>
  );
}

/* ---------- levels, selection, status ---------- */

function Levels() {
  const at = (i: number) => `${(i / 60) * 100}%`;
  return (
    <section className="flex min-w-0 flex-1 flex-col bg-[#222222] pl-[5px] pr-2">
      <div className="flex h-[33px] items-center gap-[10px] pb-[5px] pl-[7px] text-[#b4b4b4]">
        Levels <Menu />
      </div>
      <div className="flex h-[41px] border border-black bg-[#1c1c1c]">
        <span className="my-px ml-px w-px bg-[#d9d24a]" />
        <span className="w-[3px] bg-[#2a2618]" />
        <span className="ml-auto flex w-[10px] flex-col border-l border-black">
          <span className="flex-1 border-b border-black" />
          <span className="flex-1" />
        </span>
      </div>
      <div className="pr-[11px] pl-[2px]">
        <svg className="block h-5 w-full overflow-visible" fontSize="10" fill="#8a8a8a" aria-hidden="true">
          {Array.from({ length: 361 }, (_, i) => (
            <line key={i} x1={at(i / 6)} x2={at(i / 6)} y1="0" y2={i % 6 === 0 ? 4 : 2} stroke="#6a6a6a" />
          ))}
          <text x="-1" y="15">dB</text>
          {Array.from({ length: 60 }, (_, i) => (
            <text key={i} x={at(i + 1)} y="15" textAnchor="middle">{i === 59 ? "0" : `-${59 - i}`}</text>
          ))}
        </svg>
      </div>
    </section>
  );
}

function SelectionView() {
  return (
    <section className="w-[275px] bg-[#222222] pl-[11px] text-[#8f8f8f]">
      <div className="flex h-[29px] items-center gap-2 pb-px text-[#b4b4b4]">
        Selection/View <Menu />
      </div>
      <table className="w-[242px] table-fixed text-left">
        <colgroup><col className="w-[51px]" /><col className="w-[71px]" /><col className="w-[71px]" /><col /></colgroup>
        <thead>
          <tr className="h-[18px]"><td /><th className="font-normal">Start</th><th className="font-normal">End</th><th className="font-normal">Duration</th></tr>
        </thead>
        <tbody>
          {[["Selection", "0:00.000", "3:03.488", "3:03.488"], ["View", "0:00.000", "3:03.488", "3:03.488"]].map((row) => (
            <tr key={row[0]} className="h-5">
              <th className="font-normal">{row[0]}</th>
              {row.slice(1).map((v, i) => (
                <td key={i}><button className="block font-medium text-[#2f8ee8]">{v}</button></td>
              ))}
            </tr>
          ))}
        </tbody>
      </table>
    </section>
  );
}

function Dot() {
  return <span className="font-['DejaVu_Sans'] text-[8px]"> ● </span>;
}

function StatusBar() {
  return (
    <footer className="flex h-[21px] items-center border-t border-[#161616] bg-[#222222] pb-[2px] pl-2 text-[#8f8f8f]">
      Frequency Analysis completed in 5,70 seconds
      <span className="ml-auto border-r border-[#333] pr-[6px] whitespace-pre">96000 Hz<Dot />32-bit (float)<Dot />2 Channel</span>
      <span className="border-r border-[#333] pr-[6px] pl-2">134,39 MB</span>
      <span className="border-r border-[#333] pr-[6px] pl-4">3:03.488</span>
      <span className="mr-12 border-r border-[#333] pr-[6px] pl-[7px]">27,86 GB free</span>
    </footer>
  );
}

export default function App() {
  return (
    <div className="flex min-h-screen flex-col bg-[#161616] font-['Noto_Sans_CJK_SC',sans-serif] text-[11px] leading-4">
      <TitleBar />
      <ToolBar />
      <main className="mt-1 flex flex-1 gap-1 px-px">
        <div className="flex w-[485px] shrink-0 flex-col gap-[3px]">
          <FilesPanel />
          <FrequencyPanel />
        </div>
        <Editor />
      </main>
      <div className="mt-1 mb-[2px] flex h-[94px] gap-[3px] px-px">
        <Levels />
        <SelectionView />
      </div>
      <StatusBar />
    </div>
  );
}
